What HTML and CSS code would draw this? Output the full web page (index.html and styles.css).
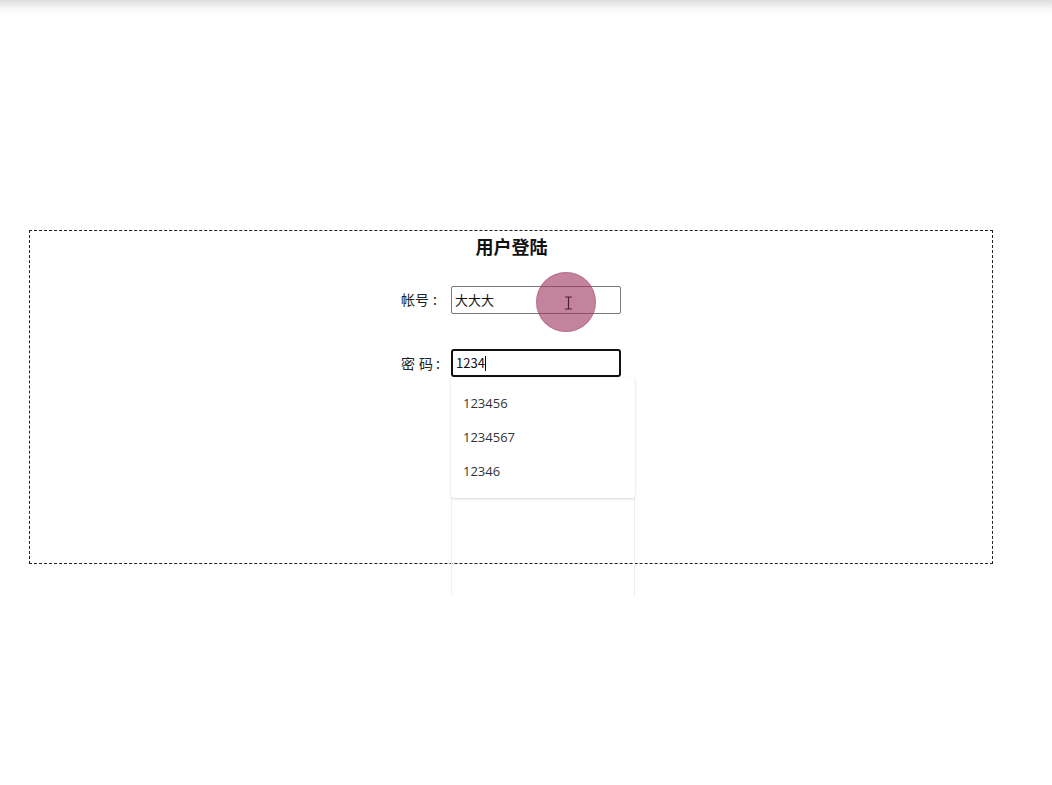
FILE: index.html
```html
<!DOCTYPE html>
<html lang="zh">
<head>
<meta charset="utf-8">
<title>用户登陆</title>
<link rel="stylesheet" href="styles.css">
</head>
<body>
<div class="topshade"></div>
<div class="box">
  <div class="title">用户登陆</div>
  <div class="row">
    <label class="label">帐号<span class="colon">:</span></label>
    <div class="field">
      <div class="input">大大大</div>
    </div>
  </div>
  <div class="row row2">
    <label class="label">密<span class="sp"></span>码<span class="colon">:</span></label>
    <div class="field">
      <div class="input focus">1234<span class="caret"></span></div>
      <div class="dropdown">
        <div class="item">123456</div>
        <div class="item">1234567</div>
        <div class="item">12346</div>
      </div>
      <div class="ghost"></div>
    </div>
  </div>
</div>
<div class="touch">
  <svg class="ibeam" width="9" height="14" viewBox="0 0 9 14"><path d="M1 1h7M4.5 1v12M1 13h7" stroke="#4a2030" stroke-width="1.2" fill="none"/></svg>
</div>
</body>
</html>
```
FILE: styles.css
```css
html, body {
  margin: 0;
  padding: 0;
  background: #fff;
  font-family: "Noto Sans", "Noto Sans CJK SC", sans-serif;
}
body {
  position: relative;
  width: 1052px;
  height: 785px;
  overflow: hidden;
}
.topshade {
  height: 14px;
  background: linear-gradient(#dcdcdc, #f7f7f7 60%, #fdfdfd);
}
.box {
  box-sizing: border-box;
  width: 964px;
  height: 334px;
  margin: 216px 0 0 29px;
  border: 1px dashed #222;
}
.title {
  text-align: center;
  font-family: "Noto Sans CJK SC", sans-serif;
  font-weight: bold;
  font-size: 18px;
  line-height: 24px;
  padding-top: 3px;
  height: 24px;
  color: #111;
  padding-left: 1px;
}
.row {
  display: flex;
  justify-content: center;
  align-items: center;
  gap: 13px;
  margin-top: 28px;
  height: 28px;
}
.row2 {
  margin-top: 35px;
}
.label {
  width: 37px;
  font-family: "Noto Sans CJK SC", sans-serif;
  font-size: 14px;
  line-height: 20px;
  color: #222;
  white-space: nowrap;
  margin-bottom: 2px;
}
.colon {
  margin-left: 4px;
}
.sp {
  display: inline-block;
  width: 4px;
}
.row2 .label {
  margin-bottom: 1px;
}
.row2 .colon {
  margin-left: 3px;
}
.field {
  position: relative;
  width: 170px;
  height: 28px;
}
.input {
  box-sizing: border-box;
  height: 28px;
  border: 1px solid #7a7a7a;
  border-radius: 2px;
  font-family: "Noto Sans CJK SC", sans-serif;
  font-size: 13px;
  line-height: 26px;
  padding-left: 3px;
  color: #111;
  background: #fff;
}
.input.focus {
  border: 2px solid #111;
  border-radius: 3px;
  line-height: 24px;
  padding-left: 3px;
}
.caret {
  display: inline-block;
  width: 1px;
  height: 15px;
  background: #000;
  vertical-align: -3px;
}
.dropdown {
  position: absolute;
  top: 29px;
  left: 0;
  width: 184px;
  box-sizing: border-box;
  padding: 8px 0 10px;
  background: #fff;
  border-radius: 3px;
  box-shadow: 0 1px 3px rgba(0, 0, 0, 0.16), 0 0 1px rgba(0, 0, 0, 0.08);
  z-index: 2;
}
.item {
  height: 34px;
  line-height: 34px;
  padding-left: 12px;
  font-family: "Open Sans", "Noto Sans", sans-serif;
  font-size: 13px;
  color: #333;
}
.ghost {
  position: absolute;
  top: 149px;
  left: 0;
  width: 184px;
  height: 98px;
  box-sizing: border-box;
  border-left: 1px solid #f1f1f1;
  border-right: 1px solid #ececec;
}
.touch {
  position: absolute;
  left: 536px;
  top: 272px;
  width: 60px;
  height: 60px;
  border-radius: 50%;
  background: rgba(160, 55, 95, 0.62);
  box-shadow: inset 0 0 0 1px rgba(140, 40, 80, 0.2);
  z-index: 3;
}
.ibeam {
  position: absolute;
  left: 28px;
  top: 24px;
}
```
